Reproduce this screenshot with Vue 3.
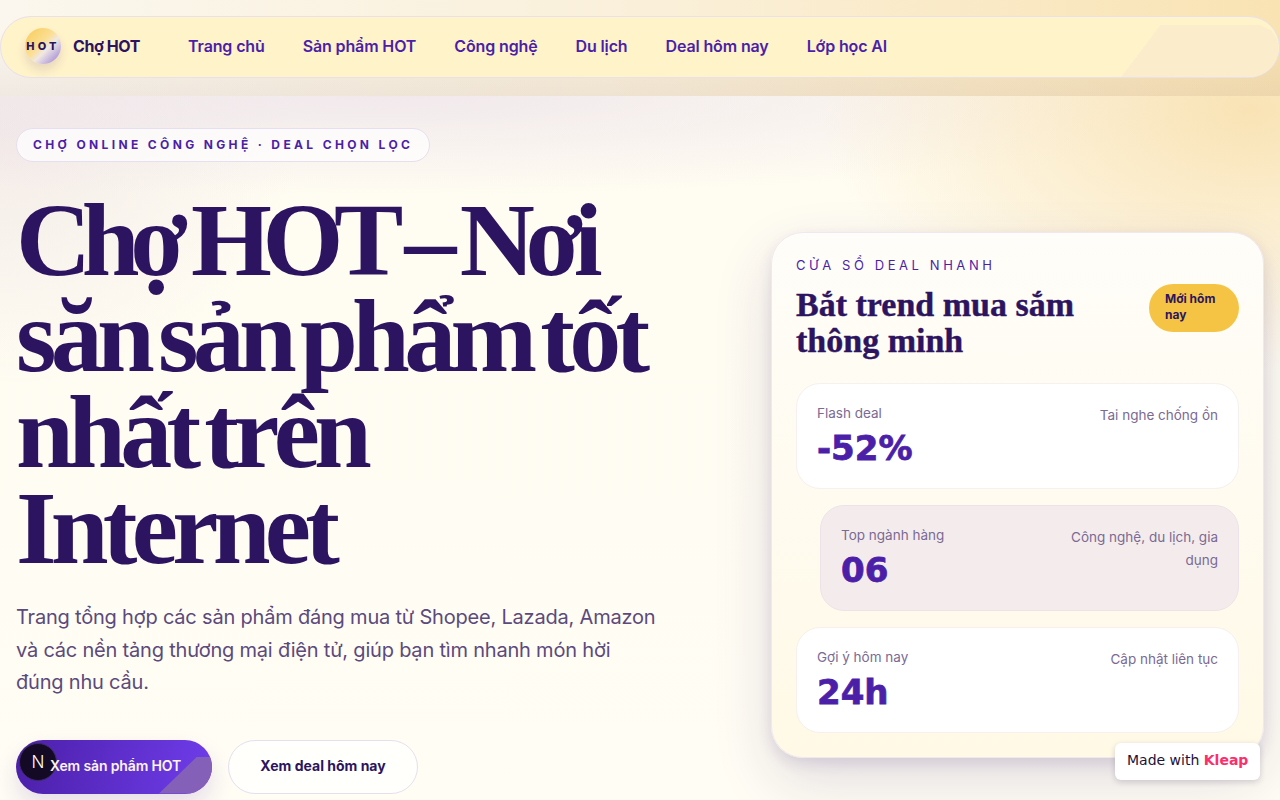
<template>
  <div class="page">
    <header class="topbar">
      <nav class="nav">
        <a class="brand">
          <span class="logo">HOT</span>
          <span class="brand-name">Chợ HOT</span>
        </a>
        <ul class="links">
          <li v-for="link in links" :key="link">{{ link }}</li>
        </ul>
      </nav>
    </header>

    <main class="hero">
      <section class="intro">
        <span class="kicker">CHỢ ONLINE CÔNG NGHỆ · DEAL CHỌN LỌC</span>
        <h1>Chợ HOT – Nơi săn sản phẩm tốt nhất trên Internet</h1>
        <p class="lead">
          Trang tổng hợp các sản phẩm đáng mua từ Shopee, Lazada, Amazon và các nền tảng thương mại điện tử, giúp bạn tìm nhanh món hời đúng nhu cầu.
        </p>
        <div class="actions">
          <a class="btn primary"><span>Xem sản phẩm HOT</span></a>
          <a class="btn ghost">Xem deal hôm nay</a>
        </div>
      </section>

      <aside class="card">
        <div class="eyebrow">CỬA SỔ DEAL NHANH</div>
        <div class="card-head">
          <h2>Bắt trend mua sắm thông minh</h2>
          <span class="tag">Mới hôm nay</span>
        </div>
        <div class="stats">
          <div v-for="stat in stats" :key="stat.label" class="stat" :class="{ shifted: stat.shifted }">
            <div>
              <div class="stat-label">{{ stat.label }}</div>
              <div class="stat-value">{{ stat.value }}</div>
            </div>
            <div class="stat-note">{{ stat.note }}</div>
          </div>
        </div>
      </aside>
    </main>

    <div class="dev-mark">N</div>
    <div class="made-with">Made with <b>Kleap</b></div>
  </div>
</template>

<script setup>
const links = ['Trang chủ', 'Sản phẩm HOT', 'Công nghệ', 'Du lịch', 'Deal hôm nay', 'Lớp học AI']

const stats = [
  { label: 'Flash deal', value: '-52%', note: 'Tai nghe chống ồn' },
  { label: 'Top ngành hàng', value: '06', note: 'Công nghệ, du lịch, gia dụng', shifted: true },
  { label: 'Gợi ý hôm nay', value: '24h', note: 'Cập nhật liên tục' }
]
</script>

<style>
html, body {
  margin: 0;
  overflow: hidden;
}
</style>

<style scoped>
.page {
  position: relative;
  height: 100vh;
  overflow: hidden;
  font-family: Inter, "Liberation Sans", sans-serif;
  color: #2c1460;
  background:
    radial-gradient(430px 260px at 1250px 110px, #f9e3b5 0%, rgba(249, 227, 181, 0) 100%),
    radial-gradient(900px 100px at 380px 96px, rgba(236, 226, 234, 0.75) 0%, rgba(236, 226, 234, 0) 100%),
    radial-gradient(300px 260px at 0px 130px, #f3ebe8 0%, rgba(243, 235, 232, 0) 100%),
    linear-gradient(180deg, #fffcf1 0%, #fffdf4 100%);
}

.topbar {
  height: 96px;
  box-sizing: border-box;
  padding-top: 16px;
  background:
    linear-gradient(180deg, rgba(90, 50, 110, 0) 30%, rgba(90, 50, 80, 0.07) 100%),
    linear-gradient(90deg, #fbf7ee 0%, #faf0da 50%, #f9e3b3 100%);
}

.nav {
  position: relative;
  overflow: hidden;
  display: flex;
  align-items: center;
  gap: 48px;
  height: 62px;
  box-sizing: border-box;
  padding: 0 24px 2px;
  background: #fff3c9;
  border: 1px solid #e9e0ea;
  border-radius: 31px;
}

.nav::after {
  content: "";
  position: absolute;
  top: 8px;
  bottom: 0;
  right: 0;
  width: 158px;
  background: #fbedcc;
  clip-path: polygon(25% 0, 88% 0, 95% 10%, 99% 28%, 100% 45%, 100% 100%, 0 100%);
}

.brand {
  display: flex;
  align-items: center;
  gap: 12px;
}

.logo {
  display: flex;
  align-items: center;
  justify-content: center;
  width: 36px;
  height: 36px;
  border-radius: 50%;
  font-size: 11px;
  font-weight: 800;
  letter-spacing: 0.3em;
  color: #2c1460;
  background: linear-gradient(135deg, #f7cb55 0%, #fbdf95 45%, #f0e8e4 60%, #8f74d4 100%);
  box-shadow: 0 6px 10px rgba(90, 50, 110, 0.14);
  white-space: nowrap;
}

.brand-name {
  font-size: 16px;
  font-weight: 700;
  letter-spacing: -0.025em;
}

.links {
  display: flex;
  gap: 38px;
  margin: 0;
  padding: 0;
  list-style: none;
  font-size: 16px;
  font-weight: 600;
  letter-spacing: -0.008em;
  color: #4b1fa8;
}

.hero {
  display: grid;
  grid-template-columns: 1fr 493px;
  gap: 48px;
  padding: 32px 16px 0;
}

.kicker {
  display: inline-block;
  padding: 10px 16px;
  font-size: 12px;
  line-height: 12px;
  font-weight: 700;
  letter-spacing: 0.28em;
  color: #4b1fa8;
  background: rgba(255, 255, 255, 0.7);
  border: 1px solid #e6dff0;
  border-radius: 20px;
}

h1 {
  margin: 30px 0 0;
  width: 660px;
  font-family: "Liberation Serif", serif;
  font-size: 104px;
  line-height: 96px;
  font-weight: 700;
  letter-spacing: -0.055em;
  word-spacing: -0.11em;
  color: #2c1460;
}

h1::first-line {
  letter-spacing: -0.09em;
  word-spacing: -0.04em;
}

.lead {
  width: 644px;
  margin: 25px 0 0;
  font-size: 20px;
  line-height: 32.5px;
  letter-spacing: -0.01em;
  color: #5b4a7c;
}

.actions {
  display: flex;
  gap: 16px;
  margin-top: 41px;
}

.btn {
  display: flex;
  align-items: center;
  justify-content: center;
  height: 54px;
  box-sizing: border-box;
  border-radius: 27px;
  padding-bottom: 2px;
  font-size: 14px;
  font-weight: 700;
}

.primary {
  position: relative;
  overflow: hidden;
  width: 196px;
  padding-left: 3px;
  font-weight: 600;
  letter-spacing: -0.01em;
  color: #fbf3ee;
  background: linear-gradient(100deg, #4b1fa8 0%, #6f3deb 100%);
  box-shadow: 0 12px 24px rgba(75, 31, 168, 0.14);
}

.primary span {
  position: relative;
  z-index: 1;
}

.primary::after {
  content: "";
  position: absolute;
  top: 17px;
  right: 0;
  bottom: 0;
  width: 53px;
  background: #8560b8;
  clip-path: polygon(72% 0, 100% 0, 100% 100%, 0 100%);
}

.ghost {
  width: 190px;
  color: #2c1460;
  background: rgba(255, 255, 255, 0.75);
  border: 1px solid #e6dff0;
}

.card {
  align-self: start;
  margin-top: 104px;
  box-sizing: border-box;
  height: 526px;
  padding: 24px;
  background: linear-gradient(180deg, #fffdf9 0%, #fff9e6 100%);
  border: 1px solid #efe8ee;
  border-radius: 32px;
  box-shadow: 0 6px 14px rgba(60, 30, 110, 0.12), 0 24px 60px rgba(60, 30, 110, 0.14);
}

.eyebrow {
  font-size: 13px;
  line-height: 16px;
  letter-spacing: 0.275em;
  color: #4b1fa8;
}

.card-head {
  display: flex;
  align-items: flex-start;
  justify-content: space-between;
  gap: 16px;
  margin-top: 10px;
}

h2 {
  margin: 4px 0 0;
  width: 300px;
  font-family: "Liberation Serif", serif;
  font-size: 34px;
  line-height: 36px;
  font-weight: 700;
  color: #2c1460;
  -webkit-text-stroke: 0.4px #2c1460;
}

.tag {
  box-sizing: border-box;
  width: 90px;
  height: 48px;
  margin-top: 1px;
  padding: 7px 16px;
  font-size: 12px;
  line-height: 16px;
  font-weight: 700;
  color: #2c1460;
  background: #f6c445;
  border-radius: 24px;
}

.stats {
  display: flex;
  flex-direction: column;
  gap: 16.5px;
  margin-top: 24px;
}

.stat {
  display: flex;
  justify-content: space-between;
  gap: 24px;
  height: 105.5px;
  box-sizing: border-box;
  padding: 20px;
  background: #fff;
  border: 1px solid #f6f0ee;
  border-radius: 24px;
}

.stat.shifted {
  margin-left: 24px;
  background: #f4ecec;
  border-color: #ece3e8;
}

.stat-label {
  padding-top: 1px;
  font-size: 13.5px;
  line-height: 17px;
  color: #7a6a94;
}

.stat-value {
  margin-top: 5px;
  font-family: "DejaVu Sans", sans-serif;
  font-size: 34px;
  line-height: 42px;
  font-weight: 700;
  color: #4b1fa8;
  -webkit-text-stroke: 0.8px #4b1fa8;
}

.stat-note {
  max-width: 170px;
  font-size: 13.5px;
  line-height: 23px;
  text-align: right;
  color: #7a6a94;
}

.dev-mark {
  position: absolute;
  left: 19px;
  top: 743px;
  display: flex;
  align-items: center;
  justify-content: center;
  width: 38px;
  height: 38px;
  border-radius: 50%;
  font-size: 17px;
  font-weight: 300;
  color: #fff;
  background: #140a26;
  border: 1px solid #3a2b62;
  box-sizing: border-box;
}

.made-with {
  position: absolute;
  left: 1115px;
  top: 743px;
  width: 145px;
  height: 37px;
  box-sizing: border-box;
  padding: 0 12px;
  font-family: "DejaVu Sans", sans-serif;
  font-size: 14px;
  line-height: 35px;
  white-space: nowrap;
  color: #1d1238;
  background: #fff;
  border-radius: 6px;
  box-shadow: 0 2px 6px rgba(30, 15, 60, 0.18);
}

.made-with b {
  color: #ff2d6b;
}
</style>
